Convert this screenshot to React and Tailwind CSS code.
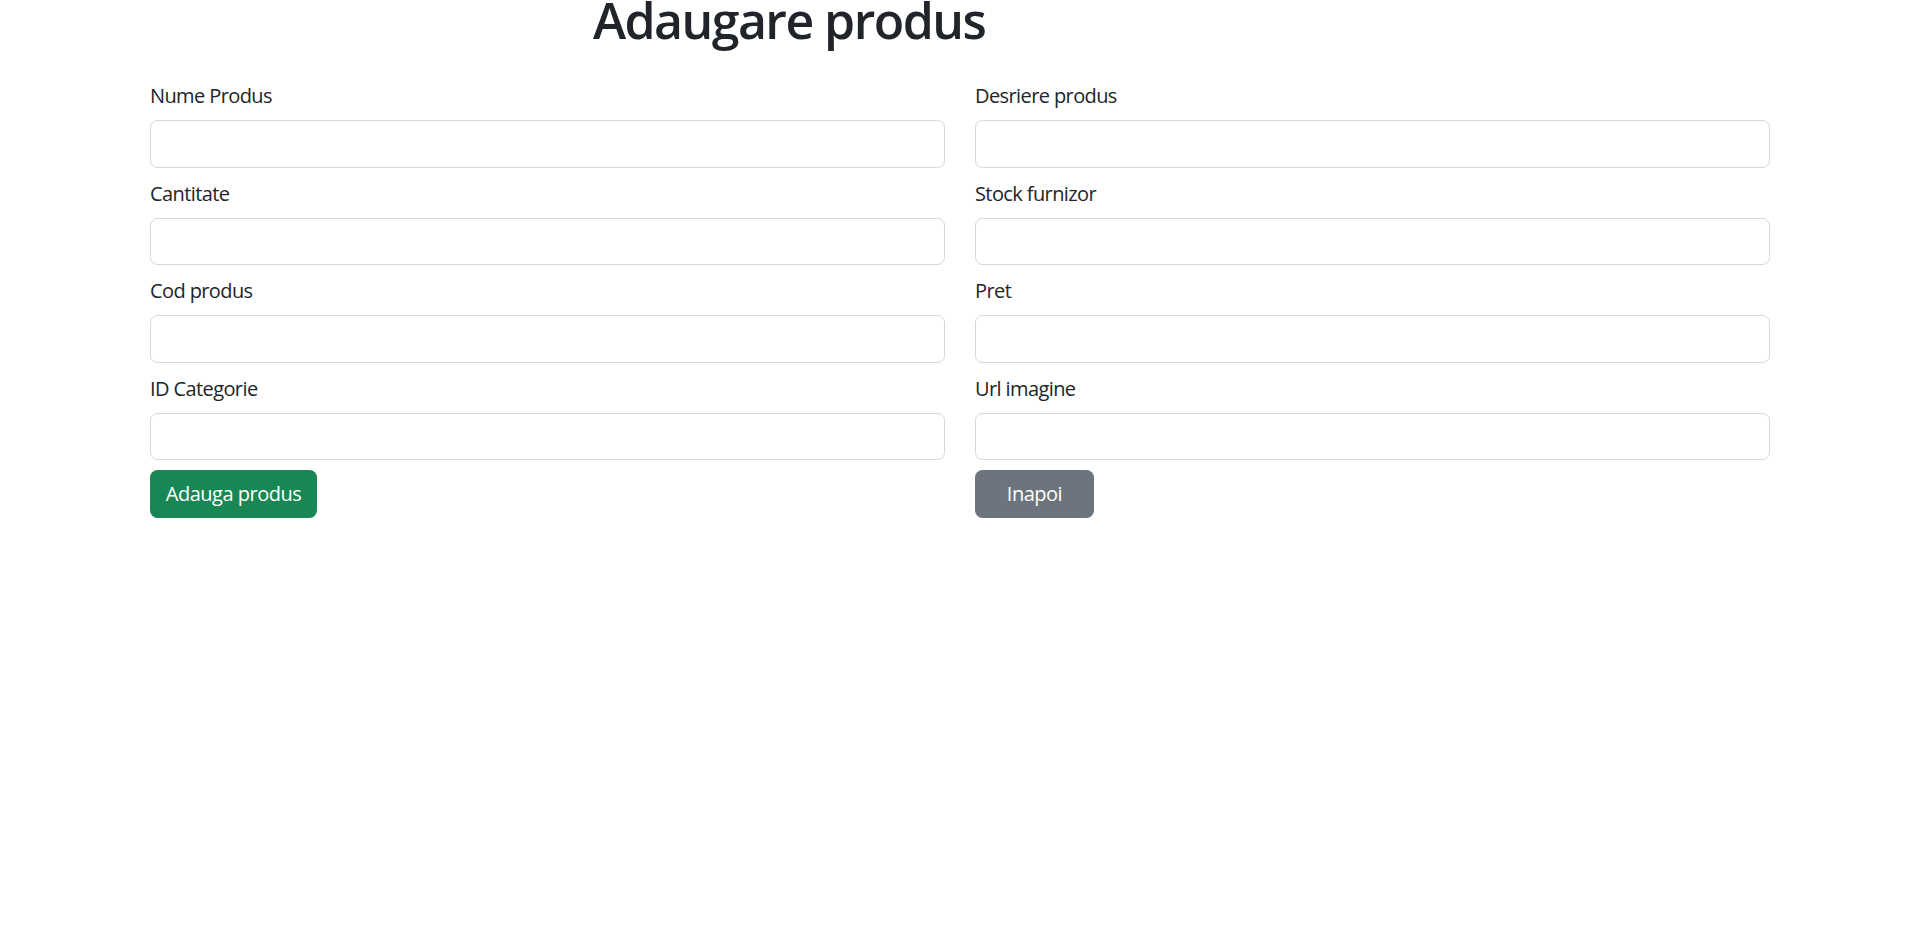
export default function App() {
  const left = ["Nume Produs", "Cantitate", "Cod produs", "ID Categorie"];
  const right = ["Desriere produs", "Stock furnizor", "Pret", "Url imagine"];
  const Field = ({ label }) => (
    <div className="mb-[10px]">
      <label className="block mb-[9px] text-[20px] leading-[31px] tracking-[-0.6px] text-[#212529]">{label}</label>
      <input type="text" className="block w-full h-[47.5px] rounded-[7.5px] border border-[#d4d6d9] bg-white px-[15px] outline-none" />
    </div>
  );
  return (
    <div className="min-h-[929px] w-full bg-white text-[#212529]" style={{ fontFamily: '"Open Sans", "Noto Sans", sans-serif' }}>
      <div className="flex flex-col">
        <div className="h-[40px] mb-[40px] pl-[593px]">
          <h1 className="text-[50px] leading-[40px] font-semibold text-[#212529] tracking-[-1.55px]">Adaugare produs</h1>
        </div>
        <div className="ml-[135px] w-[1650px] grid grid-cols-2">
          <div className="px-[15px]">
            {left.map((l) => <Field key={l} label={l} />)}
            <button className="h-[47.5px] w-[167px] rounded-[7.5px] bg-[#198754] text-white text-[20px] leading-[30px] tracking-[-0.5px]">Adauga produs</button>
          </div>
          <div className="px-[15px]">
            {right.map((l) => <Field key={l} label={l} />)}
            <button className="h-[47.5px] w-[119px] rounded-[7.5px] bg-[#6c757d] text-white text-[20px] leading-[30px] tracking-[-0.5px]">Inapoi</button>
          </div>
        </div>
      </div>
    </div>
  );
}
